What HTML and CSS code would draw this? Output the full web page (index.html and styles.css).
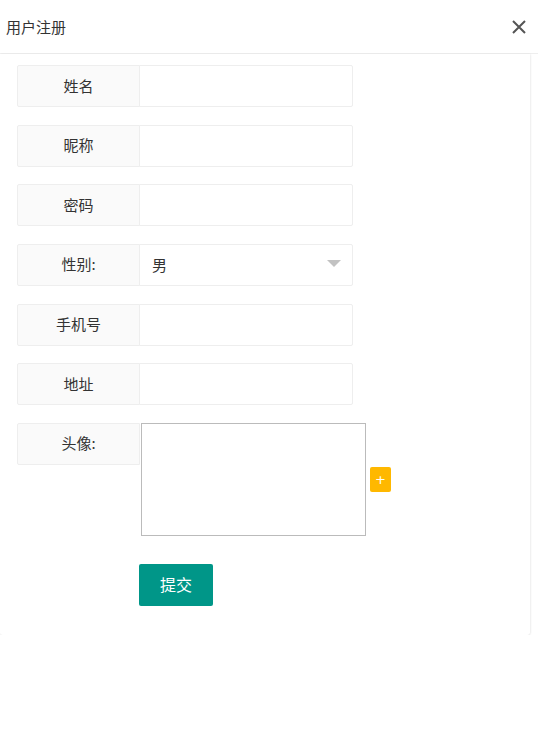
FILE: index.html
```html
<!DOCTYPE html>
<html lang="zh-CN">
<head>
<meta charset="utf-8">
<title>用户注册</title>
<link rel="stylesheet" href="styles.css">
</head>
<body>
<div class="header">
  <span class="title">用户注册</span>
  <svg class="close" width="14" height="14" viewBox="0 0 14 14"><path d="M1 1L13 13M13 1L1 13" stroke="#555" stroke-width="2" fill="none"/></svg>
</div>
<div class="card">
  <form class="form">
    <div class="row"><label class="label">姓名</label><div class="input"></div></div>
    <div class="row"><label class="label">昵称</label><div class="input"></div></div>
    <div class="row"><label class="label">密码</label><div class="input"></div></div>
    <div class="row"><label class="label">性别:</label><div class="input select"><span class="value">男</span><span class="caret"></span></div></div>
    <div class="row"><label class="label">手机号</label><div class="input"></div></div>
    <div class="row"><label class="label">地址</label><div class="input"></div></div>
    <div class="row avatar-row">
      <label class="label">头像:</label>
      <div class="avatar-box"></div>
      <span class="add">+</span>
    </div>
    <div class="actions"><button type="button" class="submit">提交</button></div>
  </form>
</div>
</body>
</html>
```
FILE: styles.css
```css
html, body {
  margin: 0;
  padding: 0;
  background: #fff;
  font-family: "Noto Sans CJK SC", "Noto Sans", sans-serif;
  color: #333;
}
.header {
  height: 53px;
  border-bottom: 1px solid #eee;
  display: flex;
  align-items: center;
  justify-content: space-between;
  padding: 0 12px 0 6px;
}
.title {
  font-size: 15px;
  line-height: 1;
  color: #333;
}
.close {
  display: block;
}
.card {
  width: 530px;
  height: 581px;
  box-sizing: border-box;
  border-radius: 0 0 3px 3px;
  box-shadow: 0 1px 2px rgba(0,0,0,0.08), 1px 0 2px rgba(0,0,0,0.05);
  padding: 11px 0 0 17px;
}
.form {
  margin: 0;
}
.row {
  display: flex;
  align-items: flex-start;
  margin-bottom: 17.67px;
}
.label {
  width: 123px;
  height: 42px;
  box-sizing: border-box;
  border: 1px solid #eee;
  border-radius: 2px 0 0 2px;
  background: #fafafa;
  display: flex;
  align-items: center;
  justify-content: center;
  font-size: 15px;
  line-height: 1;
  padding-bottom: 2px;
  color: #333;
}
.input {
  width: 214px;
  height: 42px;
  box-sizing: border-box;
  margin-left: -1px;
  border: 1px solid #eee;
  border-radius: 0 2px 2px 0;
  background: #fff;
}
.select {
  display: flex;
  align-items: center;
  justify-content: space-between;
  padding: 0 11px 0 12px;
}
.value {
  font-size: 15px;
  line-height: 1;
  color: #333;
}
.caret {
  width: 0;
  height: 0;
  border-left: 7px solid transparent;
  border-right: 7px solid transparent;
  border-top: 7px solid #c2c2c2;
  margin-top: -2px;
}
.avatar-row {
  align-items: flex-start;
  margin-bottom: 28px;
}
.avatar-box {
  width: 225px;
  height: 113px;
  box-sizing: border-box;
  border: 1px solid #bbb;
  margin-left: 1px;
}
.add {
  align-self: center;
  margin-left: 4px;
  width: 21px;
  height: 25px;
  background: #ffb800;
  border-radius: 2px;
  color: #fff;
  font-size: 13px;
  display: flex;
  align-items: center;
  justify-content: center;
  font-family: "DejaVu Sans", sans-serif;
}
.actions {
  padding-left: 122px;
}
.submit {
  width: 74px;
  height: 42px;
  border: none;
  border-radius: 2px;
  background: #009688;
  color: #fff;
  font-family: "Noto Sans CJK SC", sans-serif;
  font-size: 16px;
  line-height: 1;
  padding: 0 0 1px;
}
```
